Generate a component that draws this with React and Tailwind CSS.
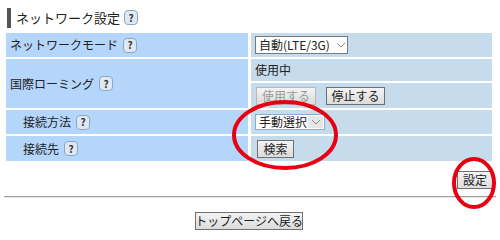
import React from 'react'

const FONT = { fontFamily: '"Noto Sans CJK JP", "Liberation Sans", sans-serif' }

function Help({ className = 'ml-[5px]' }) {
  return (
    <span className={`inline-flex items-center justify-center w-[14px] h-[15px] rounded-[4px] border border-[#8fa6bf] bg-[#dde8f4] text-[10px] font-bold leading-none text-[#333] ${className}`}>
      ?
    </span>
  )
}

function Chevron({ className = '' }) {
  return (
    <svg width="10" height="6" viewBox="0 0 10 6" className={className}>
      <path d="M1 1 L5 5 L9 1" fill="none" stroke="#8a8a8a" strokeWidth="1" />
    </svg>
  )
}

function Btn({ children, disabled, className = '' }) {
  return (
    <span
      className={`inline-flex items-center justify-center h-[18px] px-0 whitespace-nowrap text-[12px] leading-none border bg-gradient-to-b from-[#f4f4f4] to-[#dcdcdc] ${
        disabled ? 'border-[#b8b8b8] text-[#9a9a9a]' : 'border-[#707070] text-[#222]'
      } ${className}`}
    >
      {children}
    </span>
  )
}

export default function App() {
  const left = 'bg-[#b5d6fb] flex items-center text-[12px] text-[#222]'
  const right = 'bg-[#c6dcec] flex items-center pl-[4px] text-[12px] text-[#222]'

  return (
    <div className="relative w-[500px] h-[240px] bg-white overflow-hidden" style={FONT}>
      {/* title */}
      <div className="flex items-center pt-[7px] pl-[7px] h-[28px]">
        <span className="w-[4px] h-[20px] bg-[#555]" />
        <span className="ml-[5px] text-[13px] text-[#222] leading-none">ネットワーク設定</span>
        <Help className="ml-[4px]" />
      </div>

      {/* table */}
      <div className="mt-[5px] ml-[6px] w-[486px] grid grid-cols-[242px_1fr] grid-rows-[24px_22px_25px_24px_25px] gap-x-[3px] gap-y-[2px]">
        <div className={`${left} pl-[4px]`}>
          ネットワークモード<Help />
        </div>
        <div className={right}>
          <span className="flex items-center h-[18px] w-[93px] border border-[#7a7a7a] bg-white pl-[3px] text-[12px] whitespace-nowrap">
            自動(LTE/3G)
            <Chevron className="ml-[6px]" />
          </span>
        </div>

        <div className={`${left} pl-[4px] row-span-2`}>
          国際ローミング<Help />
        </div>
        <div className={right}>使用中</div>
        <div className={`${right} gap-[10px] pl-[5px]`}>
          <Btn disabled className="w-[60px]">使用する</Btn>
          <Btn className="w-[59px]">停止する</Btn>
        </div>

        <div className={`${left} pl-[17px]`}>
          接続方法<Help />
        </div>
        <div className={right}>
          <span className="flex items-center h-[16px] w-[70px] border border-[#7eaee0] bg-white pl-[3px] text-[12px] whitespace-nowrap">
            手動選択
            <span className="ml-auto mr-[1px] w-[15px] h-[12px] bg-[#e6e6e6] flex items-center justify-center">
              <Chevron />
            </span>
          </span>
        </div>

        <div className={`${left} pl-[17px]`}>
          接続先<Help />
        </div>
        <div className={`${right} pl-[6px]`}>
          <Btn className="w-[37px]">検索</Btn>
        </div>
      </div>

      {/* set button */}
      <div className="flex justify-end pr-[7px] mt-[10px]">
        <Btn className="w-[36px] h-[18px]">設定</Btn>
      </div>

      <div className="mt-[7px] mx-[4px] h-[2px] bg-[#a0a0a0] border-b border-[#e6e6e6]" />

      <div className="flex justify-center mt-[14px] pr-[2px]">
        <Btn className="w-[108px] h-[16px] text-[11px]">トップページへ戻る</Btn>
      </div>

      {/* red marks */}
      <svg className="absolute inset-0 pointer-events-none" width="500" height="240">
        <ellipse cx="285" cy="135" rx="51" ry="33" fill="none" stroke="#e60012" strokeWidth="4" />
        <ellipse cx="474" cy="183" rx="20" ry="24" fill="none" stroke="#e60012" strokeWidth="4" />
      </svg>
    </div>
  )
}
